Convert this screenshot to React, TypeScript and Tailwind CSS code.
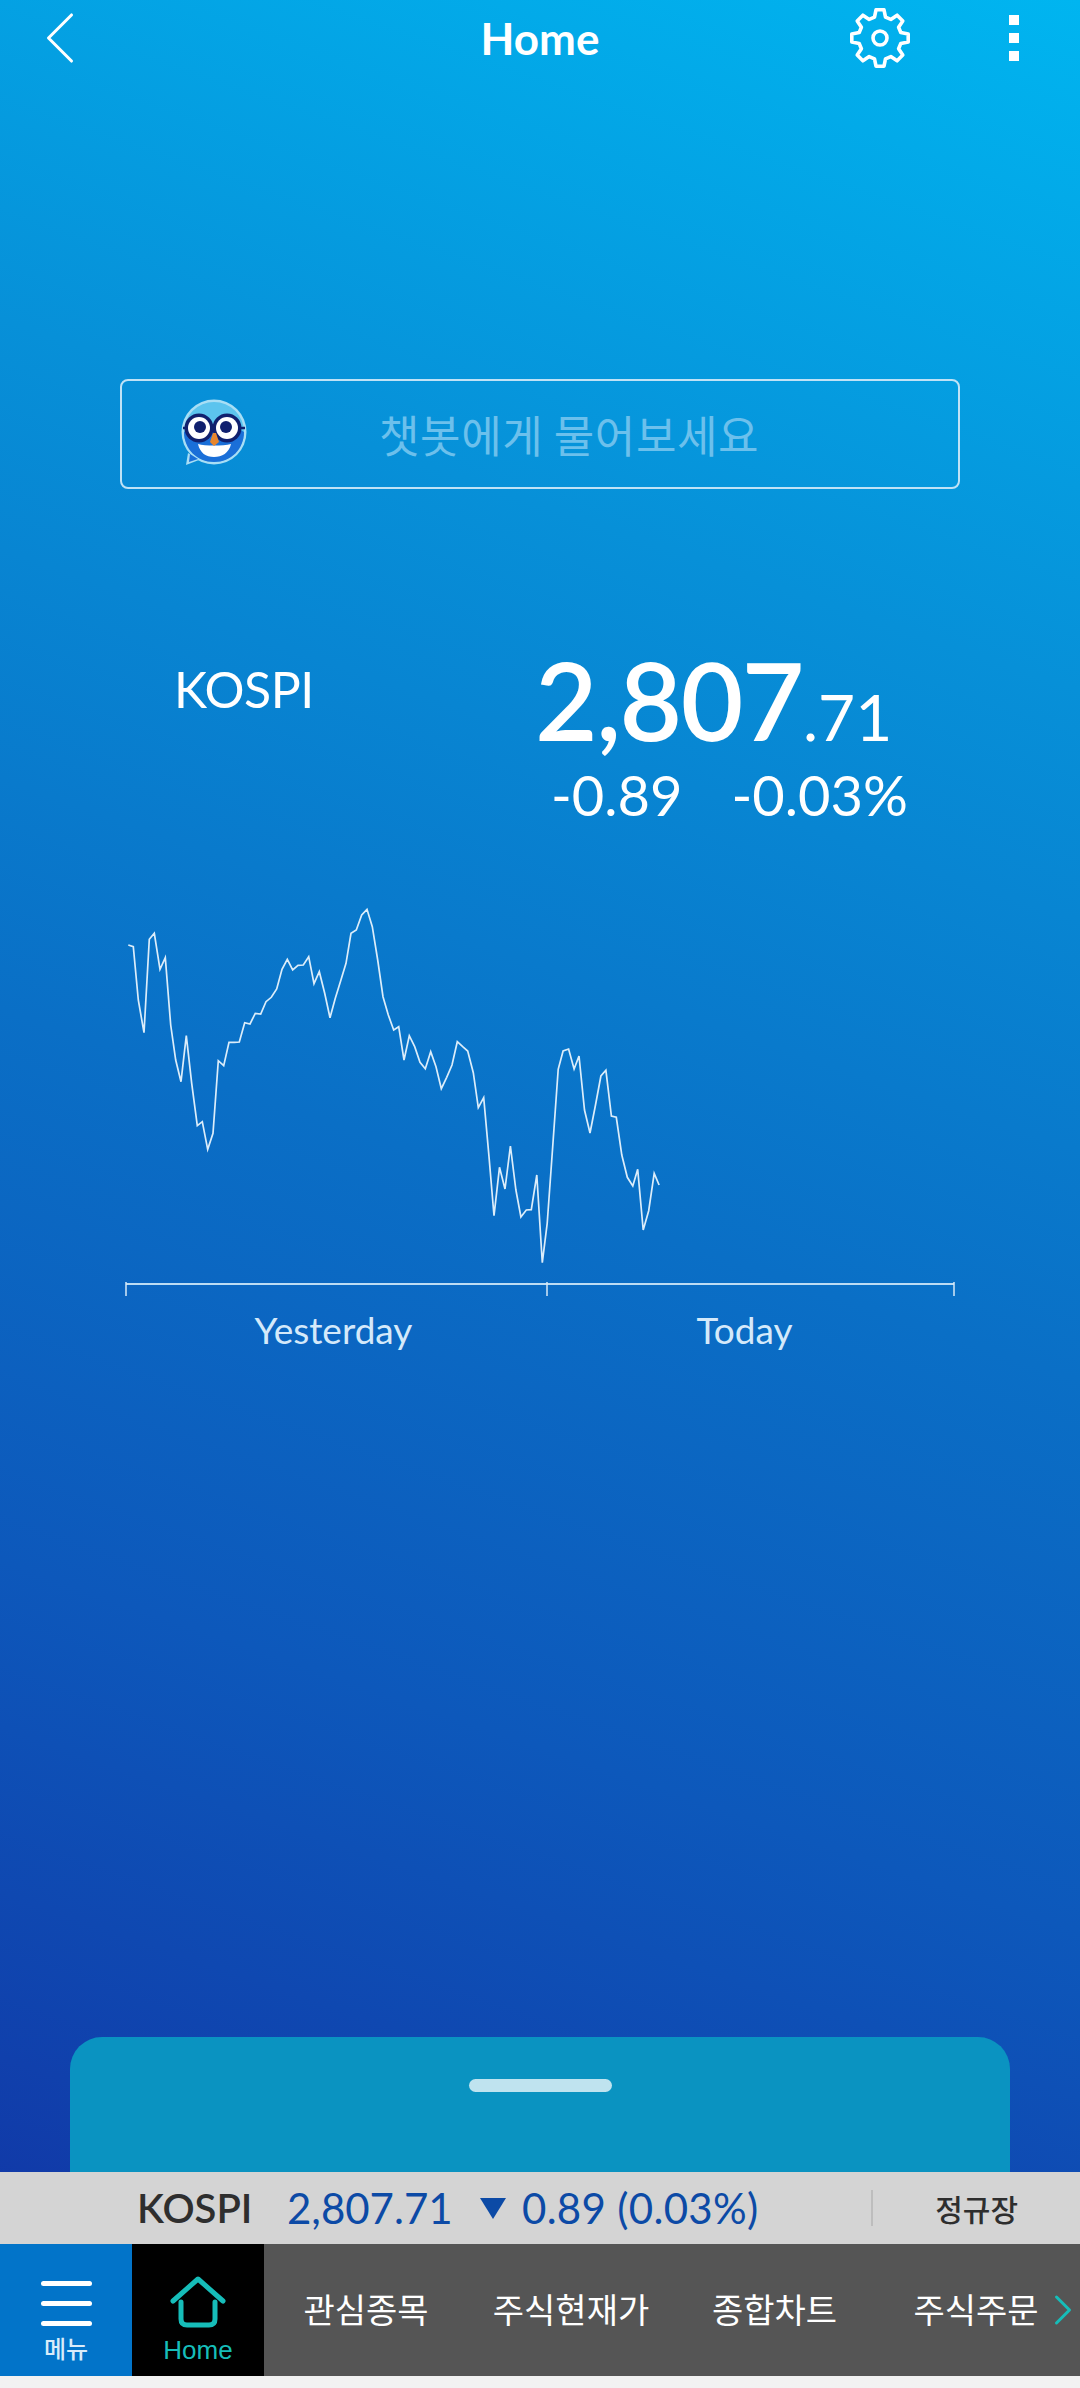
import { ChevronLeft, ChevronRight } from "lucide-react";

const LATIN = "font-['Lato','Noto_Sans_CJK_KR',sans-serif]";

// chart traced from the reference
const yesterday = [
  [55, 165], [70, 170], [85, 330], [102, 428], [118, 148], [133, 130], [150, 238], [166, 203], [182, 405], [197, 510],
  [213, 575], [229, 437], [245, 580], [262, 707], [277, 695], [293, 778], [309, 730], [325, 512], [341, 527], [357, 457],
  [373, 457], [388, 456], [404, 398], [420, 402], [436, 370], [452, 372], [468, 335], [484, 322], [500, 297], [516, 238],
  [532, 208], [548, 240], [564, 226], [580, 225], [596, 200], [612, 281], [628, 245], [644, 310], [660, 383], [676, 325],
  [692, 272], [708, 220], [723, 130], [739, 120], [755, 75], [771, 58], [787, 110], [803, 210], [819, 320], [835, 375],
  [851, 420], [866, 410], [882, 510], [898, 437], [914, 470], [930, 517], [946, 536], [962, 485], [978, 530], [994, 596],
  [1010, 562], [1026, 525], [1042, 455], [1058, 470], [1073, 483], [1090, 548], [1105, 653], [1121, 623],
].map(([x, y]) => [110 + x / 3, 890 + y / 3]);

const today = [
  [691, 350], [700, 527], [710, 382], [720, 447], [730, 318], [740, 450], [749, 531], [759, 510], [768, 509], [778, 405],
  [788, 668], [797, 550], [807, 320], [817, 88], [826, 33], [836, 27], [846, 87], [855, 48], [865, 210], [875, 279],
  [885, 195], [895, 108], [904, 91], [914, 228], [923, 232], [933, 345], [943, 412], [953, 438], [962, 388], [972, 570],
  [982, 512], [992, 400], [1001, 435],
].map(([x, y]) => [110 + x / 1.823, 1040 + y / 3]);

const linePoints = [...yesterday, ...today].map(([x, y]) => `${x.toFixed(1)},${y.toFixed(1)}`).join(" ");

// 8 tooth cog outline
const gearPath = Array.from({ length: 8 }, (_, i) => {
  const a = (i * Math.PI) / 4 - Math.PI / 2;
  const pt = (r: number, da: number) => `${(32 + r * Math.cos(a + da)).toFixed(1)} ${(32 + r * Math.sin(a + da)).toFixed(1)}`;
  return `${i === 0 ? "M" : "L"}${pt(21.5, -0.26)} L${pt(28.5, -0.14)} L${pt(28.5, 0.14)} L${pt(21.5, 0.26)}`;
}).join(" ") + " Z";

function Gear() {
  return (
    <svg viewBox="0 0 64 64" className="w-[64px] h-[64px]" fill="none" stroke="#ffffff" strokeWidth="3.6" strokeLinejoin="round">
      <path d={gearPath} />
      <circle cx="32" cy="32" r="7" />
    </svg>
  );
}

function Owl() {
  return (
    <svg viewBox="0 0 67 70" className="w-[67px] h-[70px] shrink-0">
      <circle cx="33" cy="33" r="32.5" fill="#a8def5" />
      <path d="M7 54 L5 66 L18 61 Z" fill="#a8def5" />
      <circle cx="33" cy="33" r="30" fill="#5cc4ee" />
      <path d="M3 33 C3 50 16 63 33 63 C50 63 63 50 63 33 C50 24 16 24 3 33 Z" fill="#1a6fd8" />
      <path d="M9 55 L8 63 L17 60 Z" fill="#1a6fd8" />
      <path d="M17 45 C24 47 42 47 50 45 C48 54 41 58 33 58 C25 58 19 54 17 45 Z" fill="#ffffff" />
      <path d="M2 29 H64" stroke="#10206e" strokeWidth="2.5" />
      <circle cx="18" cy="29" r="14.5" fill="#10206e" />
      <circle cx="46" cy="29" r="14.5" fill="#10206e" />
      <circle cx="18" cy="29" r="11" fill="#ffffff" />
      <circle cx="46" cy="29" r="11" fill="#ffffff" />
      <circle cx="19" cy="28" r="6" fill="#10206e" />
      <circle cx="45" cy="28" r="6" fill="#10206e" />
      <path d="M29 43 L32 34 L35 34 L38 43 L33 47 Z" fill="#e8862c" />
    </svg>
  );
}

function Chart() {
  return (
    <svg viewBox="0 900 1080 400" className="block w-[1080px] h-[400px] mt-[75px]" fill="none">
      <polyline points={linePoints} stroke="#dcedfa" strokeWidth="1.7" strokeLinejoin="miter" />
      <path d="M126 1284 H954" stroke="#bcdcf4" strokeWidth="2" />
      <path d="M126 1282 V1296 M547 1282 V1296 M954 1282 V1296" stroke="#d6e9f8" strokeWidth="1.5" />
    </svg>
  );
}

function BottomNav() {
  const tabs = [
    { label: "관심종목", width: "w-[204px]" },
    { label: "주식현재가", width: "w-[206px]" },
    { label: "종합차트", width: "w-[201px]" },
    { label: "주식주문", width: "w-[202px]" },
  ];

  return (
    <div className="relative flex h-[132px] bg-[#555555]">
      <div className="w-[132px] bg-[#0274c9] flex flex-col items-center pt-[37px]">
        <div className="flex flex-col gap-[15px]">
          <div className="w-[51px] h-[5px] rounded-full bg-white" />
          <div className="w-[51px] h-[5px] rounded-full bg-white" />
          <div className="w-[51px] h-[5px] rounded-full bg-white" />
        </div>
        <span className="mt-[7px] text-[24px] leading-[30px] font-medium text-[#d8ecfa] font-['Noto_Sans_CJK_KR',sans-serif]">메뉴</span>
      </div>
      <div className="w-[132px] bg-black flex flex-col items-center pt-[32px]">
        <svg viewBox="0 0 56 52" className="w-[56px] h-[52px]" fill="none" stroke="#16bdb9" strokeWidth="5" strokeLinecap="round" strokeLinejoin="round">
          <path d="M3 25 L28 3 L53 25" />
          <path d="M11 26 V43 Q11 49 17 49 H39 Q45 49 45 43 V26" />
        </svg>
        <span className="mt-[6px] text-[26px] leading-[32px] text-[#16bdb9] font-['Liberation_Sans',sans-serif]">Home</span>
      </div>
      {tabs.map((tab) => (
        <div
          key={tab.label}
          className={`${tab.width} flex justify-center pt-[40px] text-[34px] leading-[50px] text-white font-['Noto_Sans_CJK_KR',sans-serif]`}
        >
          {tab.label}
        </div>
      ))}
      <ChevronRight className="absolute left-[1037px] top-[40px] w-[52px] h-[52px] text-[#16bdb9]" strokeWidth={1.4} />
    </div>
  );
}

export default function App() {
  return (
    <div className={`relative w-[1080px] h-[2388px] flex flex-col overflow-hidden bg-[linear-gradient(199deg,#00b5f0_0%,#0790d8_25%,#0a6fc6_50%,#0d58bb_70%,#1230a2_100%)] ${LATIN}`}>
      <header className="h-[75px] grid grid-cols-[1fr_auto_1fr] grid-rows-[75px] items-center text-white">
        <ChevronLeft className="ml-[14px] w-[92px] h-[92px] -my-[9px]" strokeWidth={0.8} />
        <h1 className="text-[44px] font-bold leading-none">Home</h1>
        <div className="flex items-center justify-end pr-[61px]">
          <Gear />
          <div className="ml-[97px] flex flex-col gap-[8px]">
            <div className="w-[10px] h-[10px] bg-white" />
            <div className="w-[10px] h-[10px] bg-white" />
            <div className="w-[10px] h-[10px] bg-white" />
          </div>
        </div>
      </header>

      <div className="mt-[304px] ml-[120px] w-[840px] h-[110px] flex items-center pl-[59px] border-2 border-[#bfe2f6] rounded-[8px]">
        <Owl />
        <span className="ml-[131px] text-[44px] leading-none tracking-[0.6px] text-[#6cc0ec] font-['Noto_Sans_CJK_KR',sans-serif]">
          챗봇에게 물어보세요
        </span>
      </div>

      <div className="mt-[156px] pl-[174px] flex text-white">
        <div className="w-[361px] pt-[16px] text-[50px] leading-[56px] -tracking-[0.5px]">KOSPI</div>
        <div className="flex flex-col">
          <div className="flex items-baseline h-[108px] leading-none">
            <span className="text-[108px] font-semibold -tracking-[1.5px]">2,807</span>
            <span className="text-[64px]">.71</span>
          </div>
          <div className="mt-[12px] ml-[16px] flex gap-[49px] text-[56px] leading-[60px]">
            <span>-0.89</span>
            <span>-0.03%</span>
          </div>
        </div>
      </div>

      <Chart />

      <div className="mt-[8px] ml-[126px] w-[828px] grid grid-cols-[415px_407px] text-[37px] leading-[44px] text-[#d4e9fa]">
        <span className="text-center">Yesterday</span>
        <span className="text-center">Today</span>
      </div>

      <div className="mt-auto mx-[70px] h-[135px] flex justify-center pt-[42px] rounded-t-[32px] bg-[#0a93c1]">
        <div className="w-[143px] h-[13px] rounded-full bg-[#bfe3ef]" />
      </div>

      <div className="h-[72px] bg-[#d4d4d4] flex items-center pl-[137px]">
        <span className="w-[150px] text-[40px] leading-none font-semibold text-[#2e2e2e]">KOSPI</span>
        <span className="w-[193px] text-[42px] leading-none text-[#0c4aa6]">2,807.71</span>
        <span className="w-0 h-0 border-x-[13px] border-x-transparent border-t-[21px] border-t-[#0c4aa6]" />
        <span className="ml-[16px] text-[42px] leading-none tracking-[0.3px] text-[#0c4aa6]">0.89 (0.03%)</span>
        <div className="ml-auto w-[2px] h-[36px] bg-[#bdbdbd]" />
        <span className="ml-[62px] mr-[62px] text-[30px] leading-none font-medium text-[#2e2e2e] font-['Noto_Sans_CJK_KR',sans-serif]">정규장</span>
      </div>

      <BottomNav />
      <div className="h-[12px] bg-[#f2f2f2]" />
    </div>
  );
}
